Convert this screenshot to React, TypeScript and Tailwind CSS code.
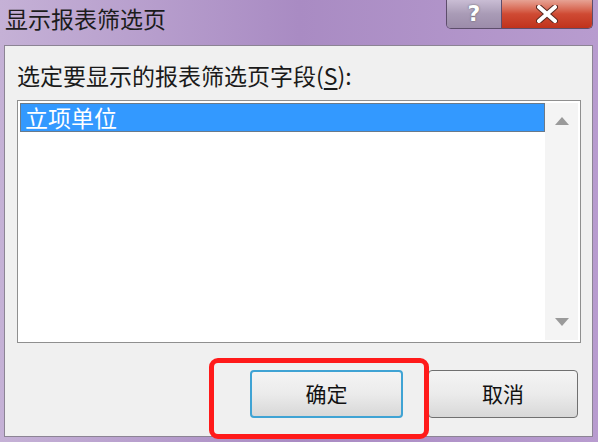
const cjk = "font-['Noto_Sans_CJK_SC','Noto_Sans',sans-serif]";

const ScrollArrow = ({ up }: { up?: boolean }) => (
  <svg width="14" height="8" viewBox="0 0 14 8">
    <polygon points={up ? "7,0 14,8 0,8" : "0,0 14,0 7,8"} fill="#9a9a9a" />
  </svg>
);

const App = () => {
  return (
    <div
      className={`relative w-[598px] h-[442px] flex flex-col overflow-hidden bg-gradient-to-r from-[#c5b1d6] via-[#a98bc3] to-[#b89ccf] ${cjk}`}
    >
      {/* title bar */}
      <div className="h-[45px] flex items-start justify-between shrink-0">
        <div className="pl-[5px] pt-[2px] text-[23px] leading-[32px] text-[#1c1c1c]">显示报表筛选页</div>
        <div className="mr-[5px] flex h-[29px] rounded-b-[5px] border border-t-0 border-[#5d4d6b] overflow-hidden">
          <div className="w-[55px] flex items-center justify-center bg-gradient-to-b from-[#c9bdd4] via-[#a99bb6] to-[#9c8caa] border-r border-[#5d4d6b]">
            <span className="font-['DejaVu_Sans',sans-serif] font-bold text-[22px] leading-none text-white [text-shadow:0_0_2px_#555]">?</span>
          </div>
          <div className="w-[90px] flex items-center justify-center bg-gradient-to-b from-[#e6a294] via-[#cf4a33] to-[#c0321c]">
            <svg width="22" height="18" viewBox="0 0 22 18">
              <path d="M3 2 L19 16 M19 2 L3 16" stroke="#5a2a22" strokeWidth="6" strokeLinecap="round" />
              <path d="M3 2 L19 16 M19 2 L3 16" stroke="#ffffff" strokeWidth="4" strokeLinecap="round" />
            </svg>
          </div>
        </div>
      </div>

      {/* client area */}
      <div className="flex-1 ml-[4px] mr-[5px] mb-[5px] border border-[#8c8494] bg-[#f0f0f0] flex flex-col pl-[12px] pr-[12px]">
        <div className="pt-[15px] text-[23px] leading-[28px] text-[#1a1a1a]">
          选定要显示的报表筛选页字段(<span className="underline underline-offset-[3px]">S</span>):
        </div>

        <div className="mt-[11px] h-[243px] w-[564px] border border-[#8f8f8f] bg-white p-[2px] flex">
          <div className="flex-1">
            <div className="h-[29px] bg-[#3399ff] border border-[#6a7a8a] pl-[4px] text-[23px] leading-[26px] text-white">立项单位</div>
          </div>
          <div className="w-[33px] bg-[#f4f4f4] flex flex-col items-center justify-between py-[14px]">
            <ScrollArrow up />
            <ScrollArrow />
          </div>
        </div>

        <div className="mt-[27px] flex justify-end gap-[25px] pr-[2px]">
          <button className="w-[153px] h-[48px] rounded-[4px] border-2 border-[#3fa3d4] bg-gradient-to-b from-[#f4f4f4] via-[#ebebeb] to-[#d8d8d8] text-[21px] text-[#111]">
            确定
          </button>
          <button className="w-[150px] h-[48px] rounded-[4px] border border-[#707070] bg-gradient-to-b from-[#f4f4f4] via-[#ebebeb] to-[#d8d8d8] text-[21px] text-[#111]">
            取消
          </button>
        </div>
      </div>

      {/* red annotation box */}
      <div className="absolute left-[209px] top-[358px] w-[220px] h-[81px] border-[5px] border-[#ff1a1a] rounded-[9px]" />
    </div>
  );
};

export default App;
